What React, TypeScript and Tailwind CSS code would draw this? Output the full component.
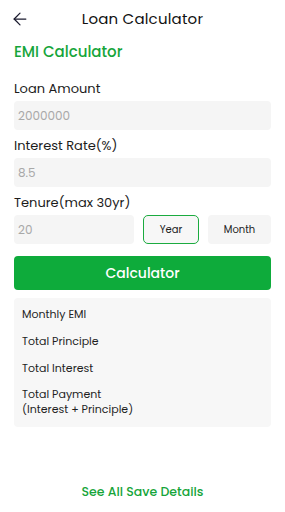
import { ArrowLeft } from 'lucide-react';

const font = { fontFamily: 'Poppins, Inter, "Open Sans", sans-serif' };

function Field({ label, value, first }: { label: string; value: string; first?: boolean }) {
  return (
    <div className={first ? 'mt-[16px]' : 'mt-[6px]'}>
      <p className="text-[13px] text-[#1c1c1c] leading-[20px]">{label}</p>
      <div className="mt-[2px] h-[29px] rounded-[4px] bg-[#f5f5f5] px-[4px] flex items-center text-[12px] text-[#a8a8a8]">
        {value}
      </div>
    </div>
  );
}

export default function App() {
  return (
    <div className="w-[285px] h-[512px] bg-white flex flex-col" style={font}>
      <div className="relative h-[38px] flex items-center justify-center">
        <ArrowLeft className="absolute left-[10px] top-[9px] w-[20px] h-[20px] text-[#1a1a2e]" strokeWidth={1.5} />
        <span className="text-[15px] text-[#111] tracking-[0.2px]">Loan Calculator</span>
      </div>
      <div className="px-[14px] flex flex-col">
        <p className="mt-[3px] text-[15px] font-medium text-[#16a53a] leading-[22px]">EMI Calculator</p>
        <Field first label="Loan Amount" value="2000000" />
        <Field label="Interest Rate(%)" value="8.5" />
        <div className="mt-[6px]">
          <p className="text-[13px] text-[#1c1c1c] leading-[20px]">Tenure(max 30yr)</p>
          <div className="mt-[2px] flex items-center gap-[9px]">
            <div className="w-[120px] h-[29px] rounded-[4px] bg-[#f5f5f5] px-[4px] flex items-center text-[12px] text-[#a8a8a8]">
              20
            </div>
            <div className="w-[56px] h-[29px] rounded-[5px] border-[1.5px] border-[#1bab3f] bg-[#f7f7f7] flex items-center justify-center text-[10px] text-[#222]">
              Year
            </div>
            <div className="flex-1 h-[29px] rounded-[4px] bg-[#f5f5f5] flex items-center justify-center text-[10px] text-[#222]">
              Month
            </div>
          </div>
        </div>
        <button className="mt-[12px] h-[34px] rounded-[4px] bg-[#0eab3b] text-white text-[14px] font-medium">
          Calculator
        </button>
        <div className="mt-[8px] rounded-[4px] bg-[#f7f7f7] px-[8px] pt-[8px] pb-[10px] text-[11px] text-[#1f1f1f] flex flex-col gap-[11px] leading-[16px]">
          <p>Monthly EMI</p>
          <p>Total Principle</p>
          <p>Total Interest</p>
          <p className="leading-[15px]">
            Total Payment
            <br />
            (Interest + Principle)
          </p>
        </div>
      </div>
      <div className="mt-auto mb-[10px] text-center text-[12.5px] font-medium text-[#16a53a]">See All Save Details</div>
    </div>
  );
}
